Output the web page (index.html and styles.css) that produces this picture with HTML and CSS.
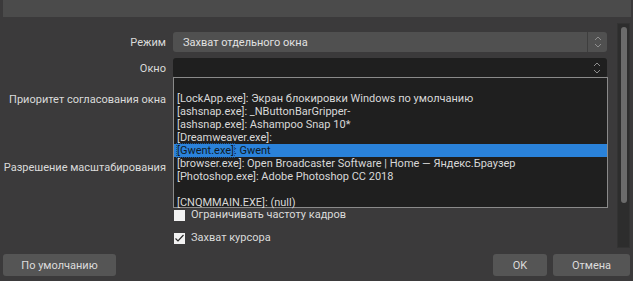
FILE: index.html
```html
<!DOCTYPE html>
<html lang="ru">

<head>
    <meta charset="UTF-8">
    <meta name="viewport" content="width=device-width, initial-scale=1.0">
    <title>Свойства - Захват игры</title>
    <link rel="stylesheet" href="styles.css">
</head>

<body>
    <div class="preview-strip"></div>

    <div class="props">
        <div class="props-form">
            <div class="form-row row-mode">
                <label class="form-label">Режим</label>
                <div class="combo combo-light">
                    <span class="combo-text">Захват отдельного окна</span>
                    <span class="combo-arrows">
                        <svg width="10" height="14" viewBox="0 0 10 14" fill="none" xmlns="http://www.w3.org/2000/svg">
                            <path d="M2 5L5 2L8 5" stroke="currentColor" stroke-width="1" />
                            <path d="M2 9L5 12L8 9" stroke="currentColor" stroke-width="1" />
                        </svg>
                    </span>
                </div>
            </div>

            <div class="form-row row-window">
                <label class="form-label">Окно</label>
                <div class="combo combo-dark">
                    <span class="combo-text"></span>
                    <span class="combo-arrows">
                        <svg width="10" height="14" viewBox="0 0 10 14" fill="none" xmlns="http://www.w3.org/2000/svg">
                            <path d="M2 5L5 2L8 5" stroke="currentColor" stroke-width="1" />
                            <path d="M2 9L5 12L8 9" stroke="currentColor" stroke-width="1" />
                        </svg>
                    </span>

                    <!-- Open popup list -->
                    <ul class="popup-list">
                        <li class="popup-item">&nbsp;</li>
                        <li class="popup-item">[LockApp.exe]: Экран блокировки Windows по умолчанию</li>
                        <li class="popup-item">[ashsnap.exe]: _NButtonBarGripper-</li>
                        <li class="popup-item">[ashsnap.exe]: Ashampoo Snap 10*</li>
                        <li class="popup-item">[Dreamweaver.exe]:</li>
                        <li class="popup-item selected"><span class="focus-box">[Gwent.exe]</span>: Gwent</li>
                        <li class="popup-item">[browser.exe]: Open Broadcaster Software | Home — Яндекс.Браузер</li>
                        <li class="popup-item">[Photoshop.exe]: Adobe Photoshop CC 2018</li>
                        <li class="popup-item">&nbsp;</li>
                        <li class="popup-item">[CNQMMAIN.EXE]: (null)</li>
                    </ul>
                </div>
            </div>

            <div class="form-row row-priority">
                <label class="form-label">Приоритет согласования окна</label>
                <div class="combo combo-light"></div>
            </div>

            <div class="form-row row-scale">
                <label class="form-label">Разрешение масштабирования</label>
                <div class="combo combo-light"></div>
            </div>

            <div class="form-row row-check first-check">
                <span></span>
                <label class="check">
                    <span class="check-box"></span>
                    Ограничивать частоту кадров
                </label>
            </div>

            <div class="form-row row-check last-check">
                <span></span>
                <label class="check">
                    <span class="check-box checked">
                        <svg width="11" height="11" viewBox="0 0 11 11" fill="none" xmlns="http://www.w3.org/2000/svg">
                            <path d="M1.5 5.5L4 8L9.5 2" stroke="#2a2a2a" stroke-width="1.2" />
                        </svg>
                    </span>
                    Захват курсора
                </label>
            </div>
        </div>

        <div class="scrollbar">
            <div class="scroll-thumb"></div>
        </div>
    </div>

    <div class="button-bar">
        <button class="btn btn-default">По умолчанию</button>
        <div class="button-group">
            <button class="btn btn-ok">OK</button>
            <button class="btn btn-cancel">Отмена</button>
        </div>
    </div>
</body>

</html>
```

FILE: styles.css
```css
* {
    margin: 0;
    padding: 0;
    box-sizing: border-box;
    font-family: Roboto, 'Liberation Sans', sans-serif;
}

body {
    width: 633px;
    height: 281px;
    background-color: #3b3a3b;
    color: #dcdcdc;
    font-size: 11px;
    overflow: hidden;
}

.preview-strip {
    height: 17px;
    margin: 0 2px 0 3px;
    background-color: #4b4b4b;
}

.props {
    display: flex;
    height: 237px;
}

.props-form {
    width: 607px;
    padding-top: 15px;
}

.form-row {
    display: grid;
    grid-template-columns: 166px 434px;
    column-gap: 7px;
    align-items: center;
    height: 20px;
}

.row-window {
    margin-top: 6px;
}

.row-priority {
    margin-top: 11px;
}

.row-scale {
    margin-top: 48px;
}

.row-check {
    height: 14px;
}

.first-check {
    margin-top: 31px;
}

.last-check {
    margin-top: 9px;
}

.form-label {
    text-align: right;
    white-space: nowrap;
    color: #dadada;
}

/* Combo boxes */
.combo {
    position: relative;
    display: flex;
    align-items: center;
    height: 20px;
    border-radius: 3px;
}

.combo-light {
    background-color: #505050;
}

.combo-dark {
    background-color: #1f1f1f;
}

.combo-text {
    flex-grow: 1;
    padding-left: 10px;
    color: #e2e2e2;
}

.combo-arrows {
    display: flex;
    align-items: center;
    justify-content: center;
    width: 20px;
    height: 20px;
    color: #8e8e8e;
}

.combo-light .combo-arrows {
    border-left: 1px solid #3e3e3e;
}

/* Popup list */
.popup-list {
    position: absolute;
    top: 19px;
    left: 0;
    width: 435px;
    height: 131px;
    list-style: none;
    background-color: #1f1f1f;
    border: 1px solid #8a8a8a;
    padding-top: 1px;
    z-index: 10;
}

.popup-item {
    height: 13px;
    line-height: 13px;
    padding-left: 3px;
    white-space: nowrap;
    color: #d8d8d8;
}

.popup-item.selected {
    background-color: #2a82da;
    color: #101a26;
}

.focus-box {
    outline: 1px dotted #1c4f8a;
}

/* Checkboxes */
.check {
    display: flex;
    align-items: center;
    gap: 6px;
    line-height: 12px;
    color: #dadada;
    white-space: nowrap;
}

.check-box {
    display: block;
    width: 11px;
    height: 11px;
    margin-left: 1px;
    background-color: #f2f2f2;
}

/* Scrollbar */
.scrollbar {
    width: 13px;
    margin: 6px 3px 6px 10px;
    padding: 3px 2px 0 3px;
    background-color: #2d2d2d;
    border: 1px solid #333;
}

.scroll-thumb {
    height: 176px;
    border-radius: 4px;
    background-color: #6b6b6b;
}

/* Buttons */
.button-bar {
    display: flex;
    justify-content: space-between;
    padding: 0 3px;
}

.button-group {
    display: flex;
    gap: 6px;
}

.btn {
    height: 22px;
    border: none;
    border-radius: 3px;
    background-color: #555555;
    color: #dcdcdc;
    font-size: 11px;
    cursor: pointer;
}

.btn-default {
    width: 113px;
}

.btn-ok {
    width: 54px;
}

.btn-cancel {
    width: 77px;
}
```
